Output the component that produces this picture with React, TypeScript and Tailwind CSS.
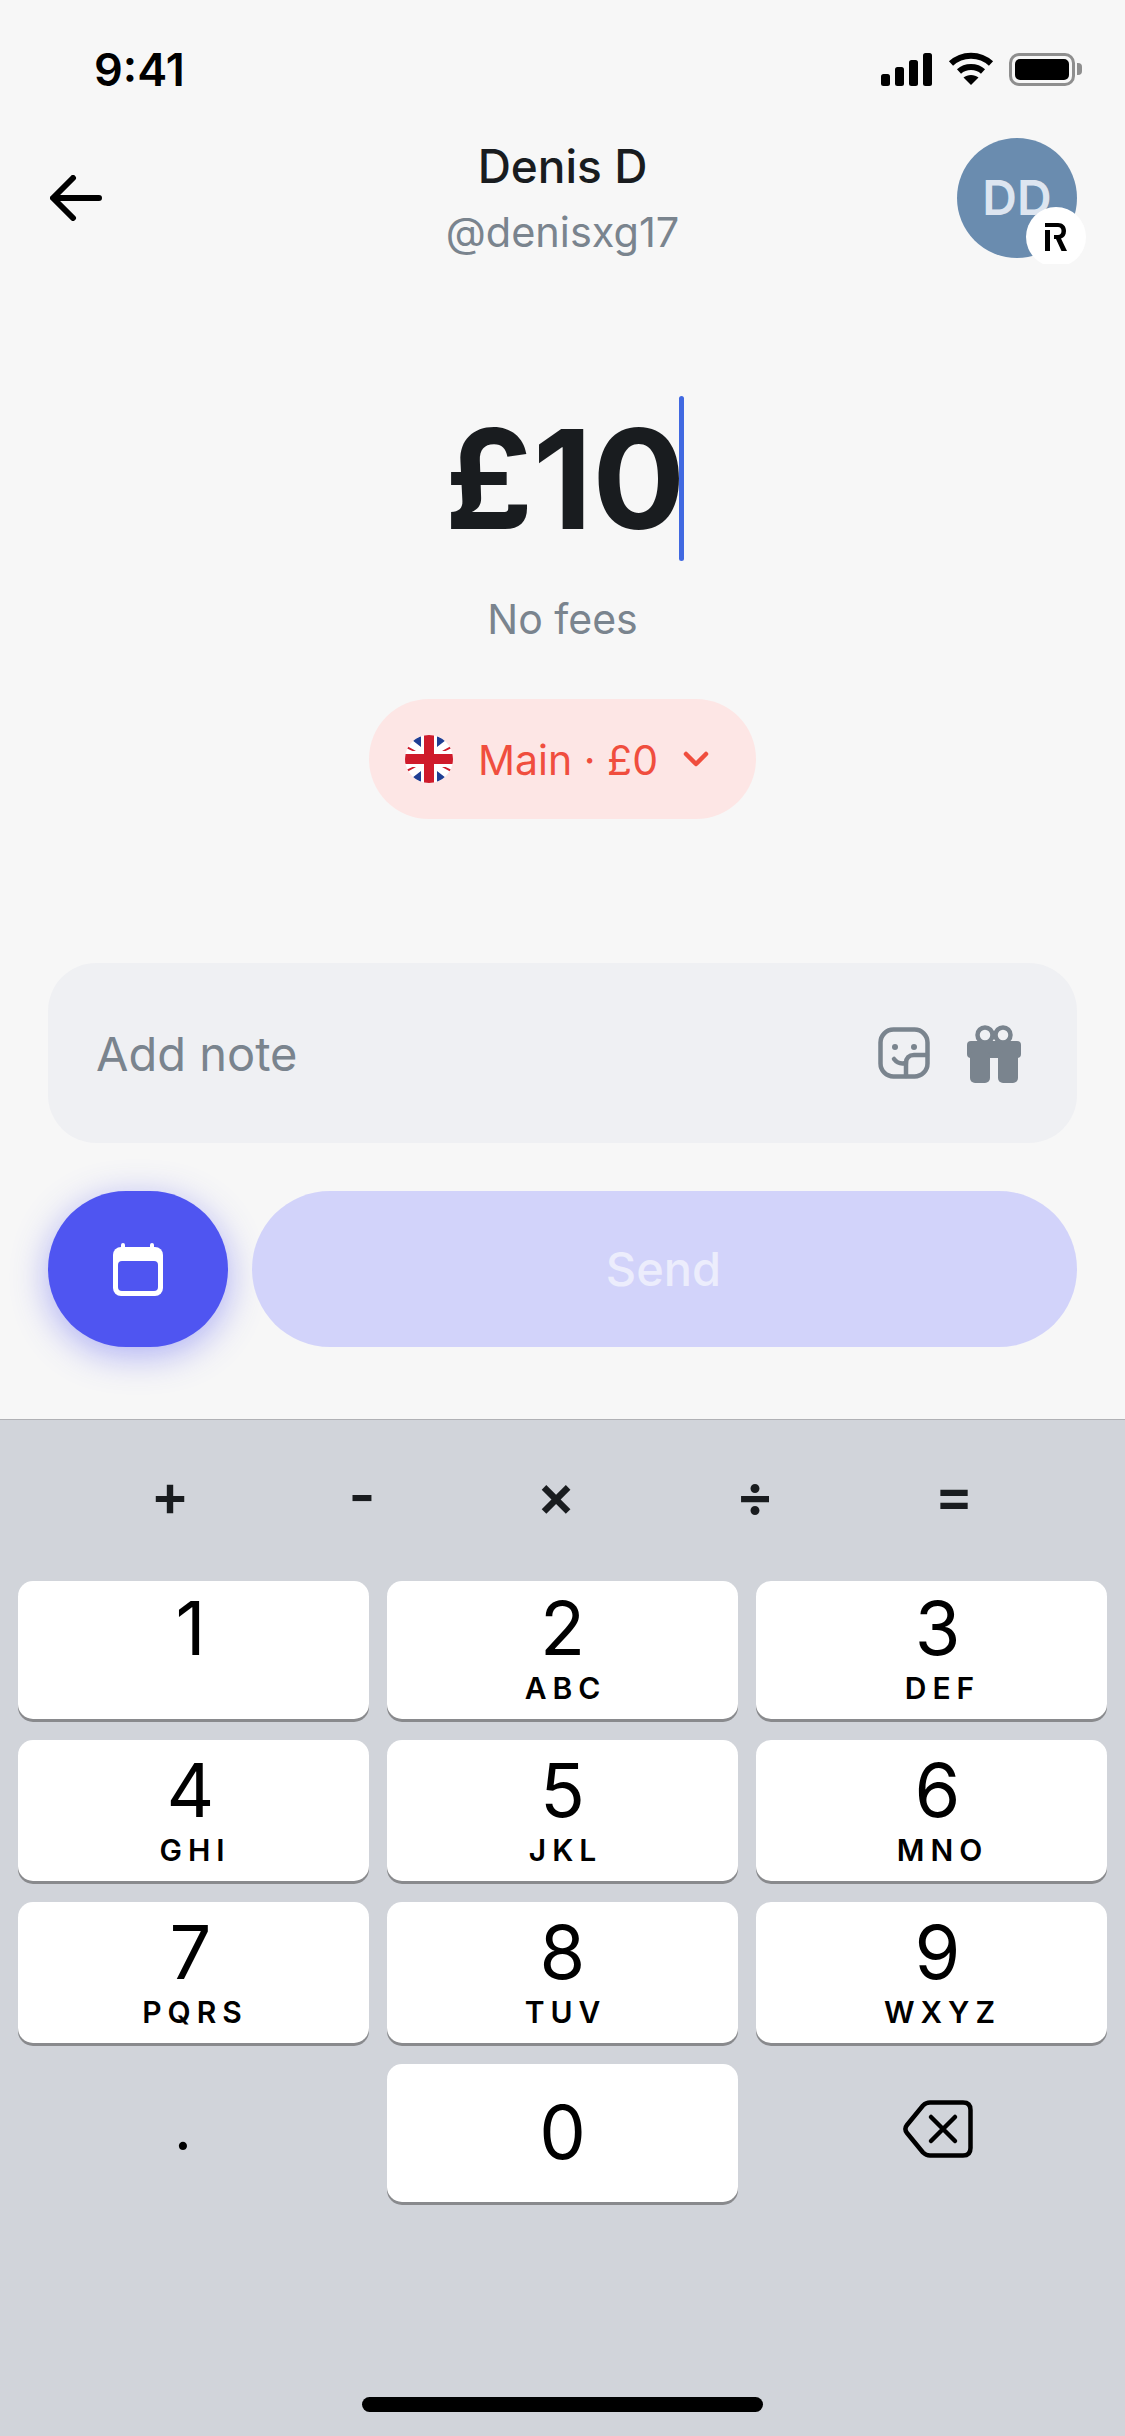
const keys = [
  { digit: "1", letters: "" },
  { digit: "2", letters: "ABC" },
  { digit: "3", letters: "DEF" },
  { digit: "4", letters: "GHI" },
  { digit: "5", letters: "JKL" },
  { digit: "6", letters: "MNO" },
  { digit: "7", letters: "PQRS" },
  { digit: "8", letters: "TUV" },
  { digit: "9", letters: "WXYZ" },
];

const operators = [
  { op: "+", width: "w-[196px]" },
  { op: "-", width: "w-[188px]" },
  { op: "×", width: "w-[200px]" },
  { op: "÷", width: "w-[198px]" },
  { op: "=", width: "w-[200px]" },
];

// the digits on the outer columns sit a little off centre in the reference
const digitOffset = ["mr-[6px]", "", "ml-[12px]"];
const letterOffset = ["mr-[3px]", "", "ml-[16px]"];

function StatusIcons() {
  return (
    <div className="flex items-center">
      <svg width="51" height="33" viewBox="0 0 51 33" fill="#000">
        <rect x="0" y="21" width="9" height="12" rx="2.5" />
        <rect x="14" y="14" width="9" height="19" rx="2.5" />
        <rect x="28" y="7" width="9" height="26" rx="2.5" />
        <rect x="42" y="0" width="9" height="33" rx="2.5" />
      </svg>
      <svg className="ml-[16px]" width="46" height="34" viewBox="0 0 46 34" fill="none" stroke="#000" strokeWidth="6">
        <path d="M3 11.5C14 1 32 1 43 11.5" />
        <path d="M11 19.5C17.5 13.5 28.5 13.5 35 19.5" />
        <path d="M23 33L15.5 25.5C19.5 22 26.5 22 30.5 25.5Z" fill="#000" stroke="none" />
      </svg>
      <div className="ml-[15px] flex items-center">
        <div className="flex h-[33px] w-[66px] rounded-[10px] border-[3px] border-[#8e8e8e] p-[3px]">
          <div className="flex-1 rounded-[5px] bg-black" />
        </div>
        <div className="ml-[2px] h-[12px] w-[5px] rounded-r-[4px] bg-[#8e8e8e]" />
      </div>
    </div>
  );
}

function UkFlag() {
  return (
    <svg width="48" height="48" viewBox="0 0 48 48">
      <defs>
        <clipPath id="flag-clip">
          <circle cx="24" cy="24" r="24" />
        </clipPath>
      </defs>
      <g clipPath="url(#flag-clip)">
        <rect width="48" height="48" fill="#fff" />
        <path d="M16 1V12L7 5ZM32 1V12L41 5ZM16 47V36L7 43ZM32 47V36L41 43Z" fill="#1f3f94" />
        <path d="M2 11L11 16H7.500L1 13ZM46 11L37 16H40.500L47 13ZM2 37L11 32H7.500L1 35ZM46 37L37 32H40.500L47 35Z" fill="#cf1b2b" />
        <rect x="19" y="0" width="10" height="48" fill="#cf1b2b" />
        <rect x="0" y="19" width="48" height="10" fill="#cf1b2b" />
      </g>
    </svg>
  );
}

function StickerIcon() {
  return (
    <svg width="52" height="52" viewBox="0 0 52 52" fill="none" stroke="#7a848e" strokeWidth="4.5" strokeLinecap="round">
      <rect x="2.5" y="2.5" width="47" height="47" rx="13" />
      <circle cx="17" cy="20" r="3" fill="#7a848e" stroke="none" />
      <circle cx="36" cy="20" r="3" fill="#7a848e" stroke="none" />
      <path d="M16 32C19 36 24 37 28 36" />
      <path d="M49 28H36C31 28 28 31 28 36V49" />
    </svg>
  );
}

function GiftIcon() {
  return (
    <svg width="54" height="58" viewBox="0 0 54 58" fill="#7a848e">
      <circle cx="18" cy="10" r="7.500" fill="none" stroke="#7a848e" strokeWidth="4.500" />
      <circle cx="36" cy="10" r="7.500" fill="none" stroke="#7a848e" strokeWidth="4.500" />
      <rect x="0" y="16" width="54" height="17" rx="4" />
      <rect x="3" y="26" width="20" height="32" rx="5" />
      <rect x="31" y="26" width="20" height="32" rx="5" />
    </svg>
  );
}

function CalendarIcon() {
  return (
    <svg width="50" height="53" viewBox="0 0 50 53">
      <rect x="8" y="0" width="4" height="8" rx="2" fill="#fff" />
      <rect x="37" y="0" width="4" height="8" rx="2" fill="#fff" />
      <rect x="0" y="4" width="50" height="49" rx="8" fill="#fff" />
      <rect x="5" y="18" width="40" height="30" rx="4" fill="#4f55f1" />
    </svg>
  );
}

function Key({ digit, letters, index }: { digit: string; letters: string; index: number }) {
  const col = index % 3;
  return (
    <div className={`flex flex-col items-center rounded-[15px] bg-white text-black shadow-[0_3px_0_#898a8d] ${index < 3 ? "pt-[9px]" : "pt-[12px]"}`}>
      <span className={`text-[74px] leading-[76px] ${digitOffset[col]}`}>{digit}</span>
      <span className={`mt-[4px] h-[36px] pl-[6px] text-[30px] leading-[36px] font-semibold tracking-[0.2em] ${letterOffset[col]}`}>{letters}</span>
    </div>
  );
}

export default function App() {
  return (
    <div className="flex h-[2436px] w-[1125px] flex-col overflow-hidden bg-[#f7f7f7] font-[Inter,sans-serif] text-[#191c1f]">
      <div className="flex h-[138px] shrink-0 items-start justify-between pt-[43px] pr-[43px] pl-[94px]">
        <span className="text-[45px] leading-[54px] font-semibold text-black">9:41</span>
        <div className="pt-[9px]">
          <StatusIcons />
        </div>
      </div>

      <div className="flex h-[126px] shrink-0 overflow-hidden px-[48px]">
        <div className="flex h-[120px] w-[120px] items-center pl-[2px]">
          <svg width="52" height="46" viewBox="0 0 52 46" fill="none" stroke="#000" strokeWidth="6" strokeLinecap="round" strokeLinejoin="round">
            <path d="M49 23H4M23 3L3 23L23 43" />
          </svg>
        </div>
        <div className="flex flex-1 flex-col items-center pt-[1px]">
          <span className="text-[46px] leading-[54px] font-medium">Denis D</span>
          <span className="mt-[14px] text-[41.5px] leading-[50px] text-[#7a848e]">@denisxg17</span>
        </div>
        <div className="relative h-[120px] w-[120px] rounded-full bg-[#6a8caf]">
          <span className="flex h-full items-center justify-center text-[48px] font-semibold text-[#dde5f0]">DD</span>
          <div className="absolute top-[69px] left-[69px] flex h-[60px] w-[60px] items-center justify-center rounded-full bg-white">
            <svg width="22" height="28" viewBox="0 0 22 28" fill="#000">
              <path d="M0 0H13C18 0 21 3 21 8C21 12 19 14.500 16 15.500L22 28H16.500L11 16H9V12H13C15 12 16.500 10.500 16.500 8C16.500 5.500 15 4 13 4H0Z" />
              <rect x="0" y="7" width="5" height="21" />
            </svg>
          </div>
        </div>
      </div>

      <div className="mt-[132px] flex justify-center">
        <div className="ml-[4px] flex h-[165px] items-center">
          <span className="text-[138px] leading-[165px] font-bold">£10</span>
          <div className="-ml-[6px] h-[165px] w-[5px] rounded-full bg-[#4169e1]" />
        </div>
      </div>

      <div className="mt-[33px] text-center text-[41px] leading-[50px] text-[#7a848e]">No fees</div>

      <div className="mt-[55px] flex justify-center">
        <div className="flex h-[120px] w-[387px] items-center rounded-full bg-[#fde6e5] pl-[36px] text-[#f04e3e]">
          <UkFlag />
          <span className="ml-[25px] pt-[1px] text-[41px] leading-[50px]">Main · £0</span>
          <svg className="ml-[25px]" width="26" height="16" viewBox="0 0 26 16" fill="none" stroke="#f04e3e" strokeWidth="4.500" strokeLinecap="round" strokeLinejoin="round">
            <path d="M3 3L13 13L23 3" />
          </svg>
        </div>
      </div>

      <div className="mx-[48px] mt-[144px] flex h-[180px] items-center rounded-[48px] bg-[#eff0f3] pr-[56px] pl-[48px]">
        <span className="flex-1 pt-[1px] text-[47px] leading-[58px] text-[#7a848e]">Add note</span>
        <StickerIcon />
        <div className="ml-[37px] pt-[2px]">
          <GiftIcon />
        </div>
      </div>

      <div className="mx-[48px] mt-[48px] flex h-[156px] gap-[24px]">
        <div className="flex w-[180px] items-center justify-center rounded-[78px] bg-[#4f55f1] shadow-[0_8px_36px_rgba(79,85,241,0.45)]">
          <CalendarIcon />
        </div>
        <div className="flex flex-1 items-center justify-center rounded-[78px] bg-[#d2d3fa] pr-[2px] text-[47px] font-medium text-[#ecedfc]">
          Send
        </div>
      </div>

      <div className="mt-[72px] flex-1 border-t border-[#b0b1b5] bg-[#d1d4da]">
        <div className="flex h-[161px] items-start pt-[42px] pl-[72px] text-[58px] leading-[66px] font-semibold">
          {operators.map((item) => (
            <span key={item.op} className={`${item.width} text-center`}>
              {item.op}
            </span>
          ))}
        </div>
        <div className="grid grid-cols-3 grid-rows-[138px_141px_141px_138px] gap-x-[18px] gap-y-[21px] px-[18px]">
          {keys.map((k, i) => (
            <Key key={k.digit} digit={k.digit} letters={k.letters} index={i} />
          ))}
          <div className="flex justify-center pt-[28px] pr-[21px] text-[62px] leading-[72px] text-black">.</div>
          <div className="flex items-center justify-center rounded-[15px] bg-white pb-[3px] text-[74px] leading-[76px] text-black shadow-[0_3px_0_#898a8d]">
            0
          </div>
          <div className="flex items-start justify-center pt-[36px] pl-[13px]">
            <svg width="70" height="58" viewBox="0 0 70 58" fill="none" stroke="#000" strokeWidth="4.500" strokeLinecap="round" strokeLinejoin="round">
              <path d="M27 2.500H60C65 2.500 67.500 5 67.500 10V48C67.500 53 65 55.500 60 55.500H27C24 55.500 22 54.500 20 52.500L4 33C2 30.500 2 27.500 4 25L20 5.500C22 3.500 24 2.500 27 2.500Z" />
              <path d="M28 17L52 41M52 17L28 41" />
            </svg>
          </div>
        </div>
        <div className="mt-[195px] flex justify-center">
          <div className="h-[15px] w-[401px] rounded-full bg-black" />
        </div>
      </div>
    </div>
  );
}
